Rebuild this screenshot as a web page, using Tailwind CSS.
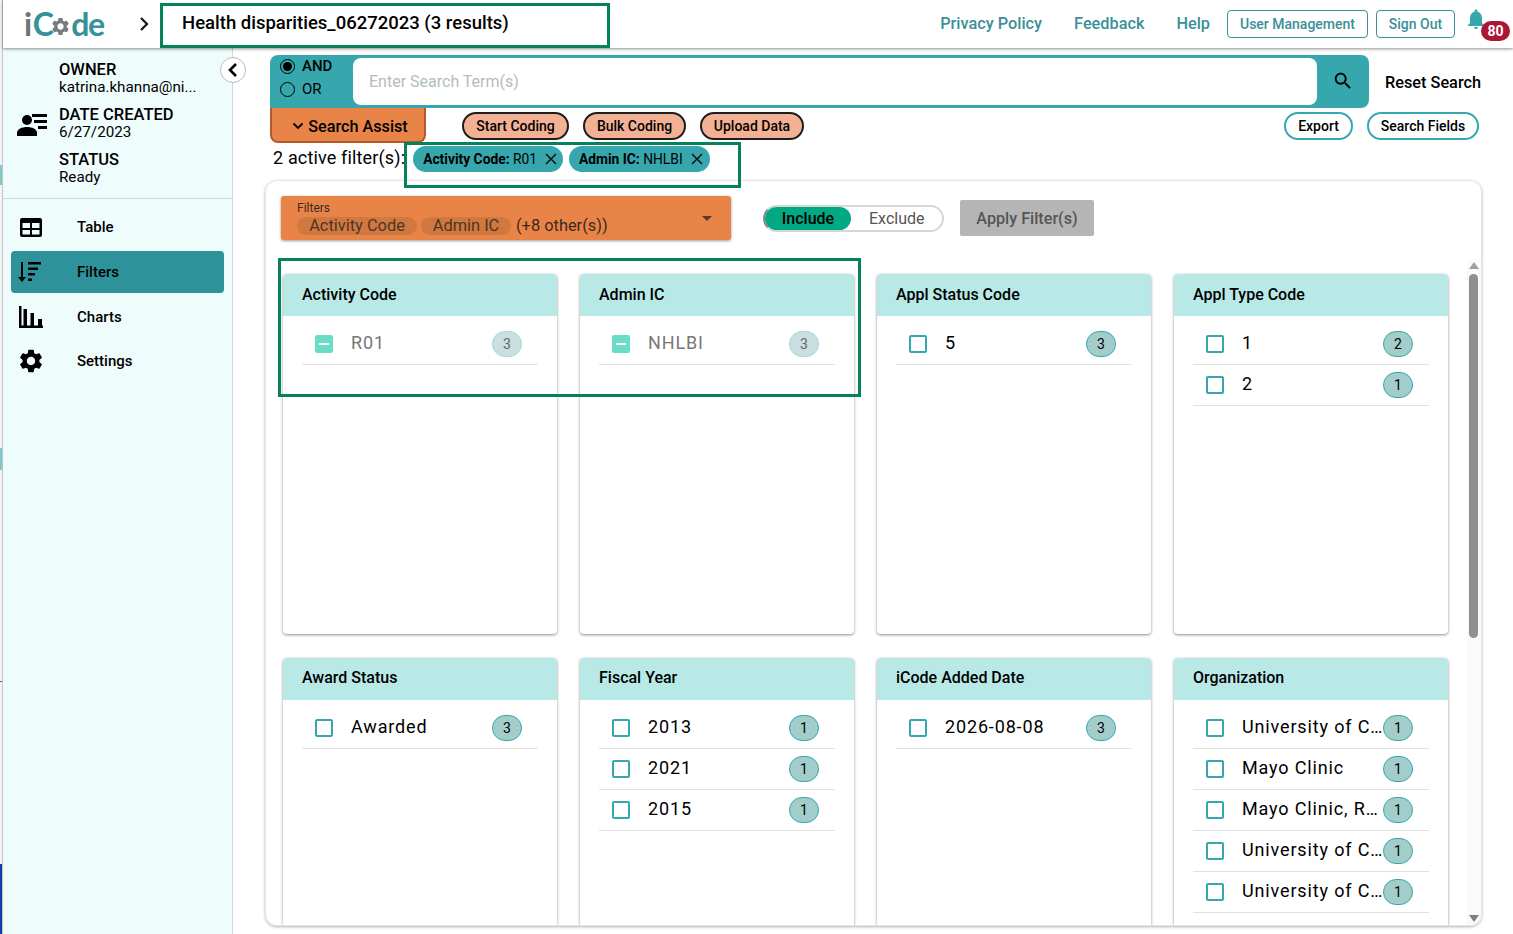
<!DOCTYPE html>
<html>
<head>
<meta charset="utf-8">
<title>iCode</title>
<script src="https://cdn.jsdelivr.net/npm/@tailwindcss/browser@4"></script>
</head>
<body class="font-['Roboto',sans-serif] text-black bg-white">
<div class="relative flex w-[1513px] h-[934px] overflow-hidden bg-white">
  <!-- desktop strip -->
  <div class="flex flex-col w-[3px] h-[934px] shrink-0 bg-[#f4f4f4] border-r border-[#c4c4c4]">
    <div class="h-[165px]"></div>
    <div class="h-[20px] bg-[#7cc8cc]"></div>
    <div class="h-[263px]"></div>
    <div class="h-[22px] bg-[#7cc8cc]"></div>
    <div class="h-[211px]"></div>
    <div class="h-[1px] bg-[#b8284c]"></div>
    <div class="h-[182px]"></div>
    <div class="h-[70px] bg-[#0f3fa8]"></div>
  </div>
  <div class="flex flex-col flex-1 min-w-0">
    <!-- header -->
    <header class="relative z-10 flex items-center h-[48px] shrink-0 bg-white shadow-[0_1px_3px_rgba(0,0,0,0.45)]">
      <div class="flex items-center ml-[21px] w-[82px] h-[40px] text-[#36919a] text-[32px] font-bold leading-[40px] font-['Lato',sans-serif] tracking-[-1.5px]">
        <span class="text-[#6f7478] mr-[2px]">i</span><span>C</span>
        <svg class="w-[21px] h-[21px] mt-[5px] ml-[-2px] shrink-0" viewBox="0 0 24 24" fill="#777c80"><path d="M19.14 12.94c.04-.3.06-.61.06-.94 0-.32-.02-.64-.07-.94l2.03-1.58c.18-.14.23-.41.12-.61l-1.92-3.32c-.12-.22-.37-.29-.59-.22l-2.39.96c-.5-.38-1.03-.7-1.62-.94l-.36-2.54c-.04-.24-.24-.41-.48-.41h-3.84c-.24 0-.43.17-.47.41l-.36 2.54c-.59.24-1.13.57-1.62.94l-2.39-.96c-.22-.08-.47 0-.59.22L2.74 8.87c-.12.21-.08.47.12.61l2.03 1.58c-.05.3-.09.63-.09.94s.02.64.07.94l-2.03 1.58c-.18.14-.23.41-.12.61l1.92 3.32c.12.22.37.29.59.22l2.39-.96c.5.38 1.03.7 1.62.94l.36 2.54c.05.24.24.41.48.41h3.84c.24 0 .44-.17.47-.41l.36-2.54c.59-.24 1.13-.56 1.62-.94l2.39.96c.22.08.47 0 .59-.22l1.92-3.32c.12-.22.07-.47-.12-.61l-2.01-1.58zM12 15.6c-1.98 0-3.6-1.62-3.6-3.6s1.62-3.6 3.6-3.6 3.6 1.62 3.6 3.6-1.62 3.6-3.6 3.6z"/></svg>
        <span>de</span>
      </div>
      <svg class="w-[12px] h-[16px] ml-[32px]" viewBox="0 0 12 16" fill="none" stroke="#111" stroke-width="2.2"><path d="M3 2l6 6-6 6"/></svg>
      <div class="ml-[32px] text-[18.5px] font-medium leading-[24px] mb-[2px]">Health disparities_06272023 (3 results)</div>
      <nav class="flex items-center ml-auto text-[16.3px] font-medium text-[#3a8f98]">
        <a class="mr-[32px]">Privacy Policy</a>
        <a class="mr-[32px]">Feedback</a>
        <a class="mr-[17px]">Help</a>
        <a class="flex items-center justify-center w-[141px] h-[28px] border border-[#3a8f98] rounded-[4px] text-[14px] mr-[8px]">User Management</a>
        <a class="flex items-center justify-center w-[79px] h-[28px] border border-[#3a8f98] rounded-[4px] text-[14px] mr-[10px]">Sign Out</a>
        <div class="relative w-[48px] h-[40px]">
          <svg class="absolute left-[-1px] top-[3px] w-[24px] h-[24px]" viewBox="0 0 24 24" fill="#36a7ad"><path d="M12 22c1.1 0 2-.9 2-2h-4c0 1.1.89 2 2 2zm6-6v-5c0-3.07-1.64-5.64-4.5-6.32V4c0-.83-.67-1.5-1.5-1.5s-1.5.67-1.5 1.5v.68C7.63 5.36 6 7.92 6 11v5l-2 2v1h16v-1l-2-2z"/></svg>
          <span class="absolute left-[16px] top-[17px] flex items-center justify-center w-[29px] h-[20px] rounded-full bg-[#ab1634] text-white text-[14px] font-bold">80</span>
        </div>
      </nav>
    </header>
    <div class="flex flex-1 min-h-0">
      <!-- sidebar -->
      <aside class="relative w-[230px] shrink-0 bg-[#effcfc] border-r border-[#c9dcdc]">
        <div class="flex items-center h-[151px] border-b border-[#c9dcdc] pl-[14px]">
          <svg class="w-[31px] h-[24px] shrink-0 mt-[4px]" viewBox="0 0 31 24" fill="#000">
            <circle cx="10" cy="7" r="5"/><path d="M0 23v-3c0-4 5-6 10-6s10 2 10 6v3z"/>
            <rect x="15" y="1" width="15" height="3"/><rect x="17" y="7" width="13" height="3"/><rect x="21" y="13" width="9" height="3"/>
          </svg>
          <div class="ml-[11px] pt-[5px]">
            <div class="h-[45px]">
              <div class="text-[16.5px] font-medium leading-[17px]">OWNER</div>
              <div class="text-[15.2px] leading-[18px]">katrina.khanna@ni...</div>
            </div>
            <div class="h-[45px]">
              <div class="text-[16.5px] font-medium leading-[17px]">DATE CREATED</div>
              <div class="text-[15.2px] leading-[18px]">6/27/2023</div>
            </div>
            <div class="h-[40px]">
              <div class="text-[16.5px] font-medium leading-[17px]">STATUS</div>
              <div class="text-[15.2px] leading-[18px]">Ready</div>
            </div>
          </div>
        </div>
        <nav class="pt-[7px] text-[15px] font-medium">
          <a class="flex items-center h-[42px] mx-[8px] mb-[3px] rounded-[4px]">
            <svg class="ml-[8px] w-[24px] h-[24px]" viewBox="0 0 24 24" fill="#000"><path fill-rule="evenodd" d="M3 3h18a2 2 0 0 1 2 2v15a2 2 0 0 1-2 2H3a2 2 0 0 1-2-2V5a2 2 0 0 1 2-2zM3.500 8v5h7.500V8zM13 8v5h7.500V8zM3.500 15v4.500H11V15zM13 15v4.500h7.500V15z"/></svg>
            <span class="ml-[34px]">Table</span>
          </a>
          <a class="flex items-center h-[42px] mx-[8px] mb-[3px] rounded-[4px] bg-[#2d9299]">
            <svg class="ml-[6px] w-[26px] h-[24px]" viewBox="0 0 26 24" fill="#000">
              <rect x="4" y="2" width="2" height="17"/><path d="M1 17h8l-4 5z"/>
              <rect x="11" y="2" width="13" height="2.500"/><rect x="11" y="7.500" width="10" height="2.500"/><rect x="11" y="13" width="7" height="2.500"/><rect x="11" y="18.500" width="4" height="2.500"/>
            </svg>
            <span class="ml-[34px]">Filters</span>
          </a>
          <a class="flex items-center h-[42px] mx-[8px] mb-[2px] rounded-[4px]">
            <svg class="ml-[8px] w-[24px] h-[24px]" viewBox="0 0 24 24" fill="#000">
              <rect x="0" y="1" width="2.500" height="22"/><rect x="0" y="20.500" width="24" height="2.500"/><rect x="4.500" y="4" width="3.500" height="17"/><rect x="11.500" y="8" width="3.500" height="13"/><rect x="19" y="14" width="4" height="7"/>
            </svg>
            <span class="ml-[34px]">Charts</span>
          </a>
          <a class="flex items-center h-[42px] mx-[8px] rounded-[4px]">
            <svg class="ml-[6px] w-[28px] h-[28px]" viewBox="0 0 24 24" fill="#000"><path d="M19.14 12.94c.04-.3.06-.61.06-.94 0-.32-.02-.64-.07-.94l2.03-1.58c.18-.14.23-.41.12-.61l-1.92-3.32c-.12-.22-.37-.29-.59-.22l-2.39.96c-.5-.38-1.03-.7-1.62-.94l-.36-2.54c-.04-.24-.24-.41-.48-.41h-3.84c-.24 0-.43.17-.47.41l-.36 2.54c-.59.24-1.13.57-1.62.94l-2.39-.96c-.22-.08-.47 0-.59.22L2.74 8.87c-.12.21-.08.47.12.61l2.03 1.58c-.05.3-.09.63-.09.94s.02.64.07.94l-2.03 1.58c-.18.14-.23.41-.12.61l1.92 3.32c.12.22.37.29.59.22l2.39-.96c.5.38 1.03.7 1.62.94l.36 2.54c.05.24.24.41.48.41h3.84c.24 0 .44-.17.47-.41l.36-2.54c.59-.24 1.13-.56 1.62-.94l2.39.96c.22.08.47 0 .59-.22l1.92-3.32c.12-.22.07-.47-.12-.61l-2.01-1.58zM12 15.600c-1.98 0-3.6-1.62-3.6-3.6s1.62-3.6 3.6-3.6 3.6 1.62 3.6 3.6-1.62 3.6-3.6 3.6z"/></svg>
            <span class="ml-[32px]">Settings</span>
          </a>
        </nav>
      </aside>
      <!-- main -->
      <main class="relative flex-1 min-w-0 h-[886px] pl-[37px] pt-[7px]">
        <button class="absolute z-10 left-[-13px] top-[9px] flex items-center justify-center w-[26px] h-[26px] rounded-full bg-white border border-[#bbb]">
          <svg class="w-[12px] h-[16px]" viewBox="0 0 12 16" fill="none" stroke="#000" stroke-width="2.600"><path d="M9 2L3 8l6 6"/></svg>
        </button>
        <!-- search row -->
        <div class="flex items-center">
          <div class="flex w-[1099px] h-[53px] rounded-t-lg rounded-br-lg bg-[#36a7ad]">
            <div class="w-[83px] pl-[10px] text-[15px] leading-[23px]">
              <label class="flex items-center font-medium">
                <span class="flex items-center justify-center w-[15px] h-[15px] rounded-full border-[1.5px] border-black"><span class="w-[9px] h-[9px] rounded-full bg-black"></span></span>
                <span class="ml-[7px]">AND</span>
              </label>
              <label class="flex items-center">
                <span class="w-[15px] h-[15px] rounded-full border-[1.5px] border-black"></span>
                <span class="ml-[7px]">OR</span>
              </label>
            </div>
            <div class="flex items-center w-[964px] h-[47px] mt-[3px] bg-white rounded-lg pl-[16px] text-[16px] text-[#b2bcc2]">Enter Search Term(s)</div>
            <div class="flex flex-1 items-center justify-center pb-[2px]">
              <svg class="w-[22px] h-[22px]" viewBox="0 0 24 24" fill="#000"><path d="M15.500 14h-.79l-.28-.27C15.410 12.590 16 11.110 16 9.500 16 5.910 13.090 3 9.500 3S3 5.910 3 9.500 5.910 16 9.500 16c1.610 0 3.090-.59 4.230-1.570l.27.28v.79l5 4.990L20.490 19l-4.990-5zm-6 0C7.010 14 5 11.990 5 9.500S7.010 5 9.500 5 14 7.010 14 9.500 11.990 14 9.500 14z"/></svg>
            </div>
          </div>
          <button class="ml-[16px] pt-[4px] text-[16.3px] font-medium">Reset Search</button>
        </div>
        <!-- tool row -->
        <div class="flex items-start h-[35px]">
          <button class="flex items-center justify-center w-[156px] h-[35px] pt-[5px] pl-[4px] bg-[#e98449] border-x-2 border-b-2 border-[#b5592a] rounded-b-lg text-[16.2px] font-medium">
            <svg class="w-[12px] h-[8px] mr-[4px] mb-[2px]" viewBox="0 0 12 8" fill="none" stroke="#000" stroke-width="1.800"><path d="M1.500 1.500L6 6l4.500-4.500"/></svg>
            Search Assist
          </button>
          <button class="flex items-center justify-center w-[107px] h-[28px] mt-[4px] ml-[36px] rounded-full border-2 border-[#1d1d1d] bg-[#f2b095] text-[14px] font-medium">Start Coding</button>
          <button class="flex items-center justify-center w-[103px] h-[28px] mt-[4px] ml-[14px] rounded-full border-2 border-[#1d1d1d] bg-[#f2b095] text-[14px] font-medium">Bulk Coding</button>
          <button class="flex items-center justify-center w-[104px] h-[28px] mt-[4px] ml-[14px] rounded-full border-2 border-[#1d1d1d] bg-[#f2b095] text-[14px] font-medium">Upload Data</button>
          <button class="flex items-center justify-center w-[69px] h-[28px] mt-[4px] ml-auto rounded-full border-2 border-[#36a7ad] text-[14px] font-medium">Export</button>
          <button class="flex items-center justify-center w-[112px] h-[28px] mt-[4px] ml-[14px] mr-[34px] rounded-full border-2 border-[#36a7ad] text-[14px] font-medium">Search Fields</button>
        </div>
        <!-- active filters -->
        <div class="flex items-start h-[37px] pl-[3px] pt-[3px]">
          <span class="text-[18px] leading-[24px] tracking-[0.15px]">2 active filter(s):</span>
          <span class="flex items-center h-[26px] ml-[8px] pl-[10px] pr-[3px] rounded-full bg-[#36a7ad] text-[13.8px] whitespace-nowrap"><b class="font-bold">Activity Code:</b>&nbsp;R01
            <svg class="w-[18px] h-[18px] ml-[5px]" viewBox="0 0 18 18" fill="none" stroke="#111" stroke-width="1.500"><path d="M4 4l10 10M14 4L4 14"/></svg></span>
          <span class="flex items-center h-[26px] ml-[6px] pl-[10px] pr-[4px] rounded-full bg-[#36a7ad] text-[13.8px] whitespace-nowrap"><b class="font-bold">Admin IC:</b>&nbsp;NHLBI
            <svg class="w-[18px] h-[18px] ml-[5px]" viewBox="0 0 18 18" fill="none" stroke="#111" stroke-width="1.500"><path d="M4 4l10 10M14 4L4 14"/></svg></span>
        </div>
        <!-- panel -->
        <section class="relative w-[1217px] h-[746px] ml-[-5px] rounded-[12px] border border-[#e4e4e4] shadow-[0_1px_3px_rgba(0,0,0,0.3)] overflow-hidden pl-[15px] pt-[15px]">
          <div class="flex items-start h-[78px]">
            <div class="flex items-center justify-between w-[450px] h-[44px] rounded-[3px] bg-[#e98449] shadow-[0_1px_3px_rgba(0,0,0,0.4)] pl-[16px] pr-[19px]">
              <div>
                <div class="text-[12px] leading-[13px] text-[#3a2a20]">Filters</div>
                <div class="flex items-center h-[20px] pt-[2px] text-[16.4px] leading-[18px] text-[#3a2a20]">
                  <span class="flex justify-center w-[120px] rounded-full bg-[#d0783f] text-[#4d3526]">Activity Code</span>
                  <span class="flex justify-center w-[90px] ml-[4px] rounded-full bg-[#d0783f] text-[#4d3526]">Admin IC</span>
                  <span class="ml-[5px]">(+8 other(s))</span>
                </div>
              </div>
              <span class="w-0 h-0 border-x-[5px] border-x-transparent border-t-[5px] border-t-[#5a3a28]"></span>
            </div>
            <div class="flex items-center w-[181px] h-[27px] mt-[9px] ml-[32px] rounded-full border-2 border-[#d6d6d6] border-l-[#888] text-[16px] font-medium">
              <span class="flex items-center justify-center w-[86px] h-[23px] rounded-full bg-[#00a884]">Include</span>
              <span class="ml-[18px] font-normal text-[#555]">Exclude</span>
            </div>
            <button class="flex items-center justify-center w-[134px] h-[36px] pt-[3px] mt-[4px] ml-[16px] rounded-[2px] bg-[#b5b5b5] text-[16.2px] font-medium text-[#555]">Apply Filter(s)</button>
          </div>
          <div class="grid grid-cols-4 w-[1165px] ml-[2px] gap-x-[23px] gap-y-[24px] grid-rows-[360px_360px]">
            <!-- Activity Code -->
            <article class="rounded-[4px] bg-white shadow-[0_1px_3px_rgba(0,0,0,0.45)] overflow-hidden">
              <h3 class="flex items-center h-[42px] pl-[19px] bg-[#b8e9e7] text-[16px] font-medium">Activity Code</h3>
              <ul class="mx-[19px] pt-[8px] text-[18px] tracking-[0.85px]">
                <li class="flex items-center h-[41px] border-b border-[#e2e2e2] pl-[13px] pr-[16px]">
                  <span class="flex items-center justify-center w-[18px] h-[18px] rounded-[2px] bg-[#6bdcc6] shrink-0"><span class="w-[10px] h-[2px] bg-white"></span></span>
                  <span class="ml-[18px] pb-[4px] flex-1 whitespace-nowrap text-[#777]">R01</span>
                  <span class="flex items-center justify-center w-[30px] h-[26px] rounded-full bg-[#c9dfe0] border border-[#a6d6d8] text-[14px] tracking-normal text-[#666]">3</span>
                </li>
              </ul>
            </article>
            <!-- Admin IC -->
            <article class="rounded-[4px] bg-white shadow-[0_1px_3px_rgba(0,0,0,0.45)] overflow-hidden">
              <h3 class="flex items-center h-[42px] pl-[19px] bg-[#b8e9e7] text-[16px] font-medium">Admin IC</h3>
              <ul class="mx-[19px] pt-[8px] text-[18px] tracking-[0.85px]">
                <li class="flex items-center h-[41px] border-b border-[#e2e2e2] pl-[13px] pr-[16px]">
                  <span class="flex items-center justify-center w-[18px] h-[18px] rounded-[2px] bg-[#6bdcc6] shrink-0"><span class="w-[10px] h-[2px] bg-white"></span></span>
                  <span class="ml-[18px] pb-[4px] flex-1 whitespace-nowrap text-[#777]">NHLBI</span>
                  <span class="flex items-center justify-center w-[30px] h-[26px] rounded-full bg-[#c9dfe0] border border-[#a6d6d8] text-[14px] tracking-normal text-[#666]">3</span>
                </li>
              </ul>
            </article>
            <!-- Appl Status Code -->
            <article class="rounded-[4px] bg-white shadow-[0_1px_3px_rgba(0,0,0,0.45)] overflow-hidden">
              <h3 class="flex items-center h-[42px] pl-[19px] bg-[#b8e9e7] text-[16px] font-medium">Appl Status Code</h3>
              <ul class="mx-[19px] pt-[8px] text-[18px] tracking-[0.85px]">
                <li class="flex items-center h-[41px] border-b border-[#e2e2e2] pl-[13px] pr-[16px]">
                  <span class="w-[18px] h-[18px] rounded-[2px] border-2 border-[#36a7ad] shrink-0"></span>
                  <span class="ml-[18px] pb-[4px] flex-1 whitespace-nowrap">5</span>
                  <span class="flex items-center justify-center w-[30px] h-[26px] rounded-full bg-[#a3cdcb] border border-[#36a7ad] text-[14px] tracking-normal">3</span>
                </li>
              </ul>
            </article>
            <!-- Appl Type Code -->
            <article class="rounded-[4px] bg-white shadow-[0_1px_3px_rgba(0,0,0,0.45)] overflow-hidden">
              <h3 class="flex items-center h-[42px] pl-[19px] bg-[#b8e9e7] text-[16px] font-medium">Appl Type Code</h3>
              <ul class="mx-[19px] pt-[8px] text-[18px] tracking-[0.85px]">
                <li class="flex items-center h-[41px] border-b border-[#e2e2e2] pl-[13px] pr-[16px]">
                  <span class="w-[18px] h-[18px] rounded-[2px] border-2 border-[#36a7ad] shrink-0"></span>
                  <span class="ml-[18px] pb-[4px] flex-1 whitespace-nowrap">1</span>
                  <span class="flex items-center justify-center w-[30px] h-[26px] rounded-full bg-[#a3cdcb] border border-[#36a7ad] text-[14px] tracking-normal">2</span>
                </li>
                <li class="flex items-center h-[41px] border-b border-[#e2e2e2] pl-[13px] pr-[16px]">
                  <span class="w-[18px] h-[18px] rounded-[2px] border-2 border-[#36a7ad] shrink-0"></span>
                  <span class="ml-[18px] pb-[4px] flex-1 whitespace-nowrap">2</span>
                  <span class="flex items-center justify-center w-[30px] h-[26px] rounded-full bg-[#a3cdcb] border border-[#36a7ad] text-[14px] tracking-normal">1</span>
                </li>
              </ul>
            </article>
            <!-- Award Status -->
            <article class="rounded-[4px] bg-white shadow-[0_1px_3px_rgba(0,0,0,0.45)] overflow-hidden">
              <h3 class="flex items-center h-[42px] pl-[19px] pb-[2px] bg-[#b8e9e7] text-[16px] font-medium">Award Status</h3>
              <ul class="mx-[19px] pt-[8px] text-[18px] tracking-[0.85px]">
                <li class="flex items-center h-[41px] border-b border-[#e2e2e2] pl-[13px] pr-[16px]">
                  <span class="w-[18px] h-[18px] rounded-[2px] border-2 border-[#36a7ad] shrink-0"></span>
                  <span class="ml-[18px] pb-[4px] flex-1 whitespace-nowrap">Awarded</span>
                  <span class="flex items-center justify-center w-[30px] h-[26px] rounded-full bg-[#a3cdcb] border border-[#36a7ad] text-[14px] tracking-normal">3</span>
                </li>
              </ul>
            </article>
            <!-- Fiscal Year -->
            <article class="rounded-[4px] bg-white shadow-[0_1px_3px_rgba(0,0,0,0.45)] overflow-hidden">
              <h3 class="flex items-center h-[42px] pl-[19px] pb-[2px] bg-[#b8e9e7] text-[16px] font-medium">Fiscal Year</h3>
              <ul class="mx-[19px] pt-[8px] text-[18px] tracking-[0.85px]">
                <li class="flex items-center h-[41px] border-b border-[#e2e2e2] pl-[13px] pr-[16px]">
                  <span class="w-[18px] h-[18px] rounded-[2px] border-2 border-[#36a7ad] shrink-0"></span>
                  <span class="ml-[18px] pb-[4px] flex-1 whitespace-nowrap">2013</span>
                  <span class="flex items-center justify-center w-[30px] h-[26px] rounded-full bg-[#a3cdcb] border border-[#36a7ad] text-[14px] tracking-normal">1</span>
                </li>
                <li class="flex items-center h-[41px] border-b border-[#e2e2e2] pl-[13px] pr-[16px]">
                  <span class="w-[18px] h-[18px] rounded-[2px] border-2 border-[#36a7ad] shrink-0"></span>
                  <span class="ml-[18px] pb-[4px] flex-1 whitespace-nowrap">2021</span>
                  <span class="flex items-center justify-center w-[30px] h-[26px] rounded-full bg-[#a3cdcb] border border-[#36a7ad] text-[14px] tracking-normal">1</span>
                </li>
                <li class="flex items-center h-[41px] border-b border-[#e2e2e2] pl-[13px] pr-[16px]">
                  <span class="w-[18px] h-[18px] rounded-[2px] border-2 border-[#36a7ad] shrink-0"></span>
                  <span class="ml-[18px] pb-[4px] flex-1 whitespace-nowrap">2015</span>
                  <span class="flex items-center justify-center w-[30px] h-[26px] rounded-full bg-[#a3cdcb] border border-[#36a7ad] text-[14px] tracking-normal">1</span>
                </li>
              </ul>
            </article>
            <!-- iCode Added Date -->
            <article class="rounded-[4px] bg-white shadow-[0_1px_3px_rgba(0,0,0,0.45)] overflow-hidden">
              <h3 class="flex items-center h-[42px] pl-[19px] pb-[2px] bg-[#b8e9e7] text-[16px] font-medium">iCode Added Date</h3>
              <ul class="mx-[19px] pt-[8px] text-[18px] tracking-[0.85px]">
                <li class="flex items-center h-[41px] border-b border-[#e2e2e2] pl-[13px] pr-[16px]">
                  <span class="w-[18px] h-[18px] rounded-[2px] border-2 border-[#36a7ad] shrink-0"></span>
                  <span class="ml-[18px] pb-[4px] flex-1 whitespace-nowrap">2026-08-08</span>
                  <span class="flex items-center justify-center w-[30px] h-[26px] rounded-full bg-[#a3cdcb] border border-[#36a7ad] text-[14px] tracking-normal">3</span>
                </li>
              </ul>
            </article>
            <!-- Organization -->
            <article class="rounded-[4px] bg-white shadow-[0_1px_3px_rgba(0,0,0,0.45)] overflow-hidden">
              <h3 class="flex items-center h-[42px] pl-[19px] pb-[2px] bg-[#b8e9e7] text-[16px] font-medium">Organization</h3>
              <ul class="mx-[19px] pt-[8px] text-[18px] tracking-[0.85px]">
                <li class="flex items-center h-[41px] border-b border-[#e2e2e2] pl-[13px] pr-[16px]">
                  <span class="w-[18px] h-[18px] rounded-[2px] border-2 border-[#36a7ad] shrink-0"></span>
                  <span class="ml-[18px] pb-[4px] flex-1 min-w-0 whitespace-nowrap">University of C…</span>
                  <span class="flex items-center justify-center w-[30px] h-[26px] shrink-0 rounded-full bg-[#a3cdcb] border border-[#36a7ad] text-[14px] tracking-normal">1</span>
                </li>
                <li class="flex items-center h-[41px] border-b border-[#e2e2e2] pl-[13px] pr-[16px]">
                  <span class="w-[18px] h-[18px] rounded-[2px] border-2 border-[#36a7ad] shrink-0"></span>
                  <span class="ml-[18px] pb-[4px] flex-1 min-w-0 whitespace-nowrap">Mayo Clinic</span>
                  <span class="flex items-center justify-center w-[30px] h-[26px] shrink-0 rounded-full bg-[#a3cdcb] border border-[#36a7ad] text-[14px] tracking-normal">1</span>
                </li>
                <li class="flex items-center h-[41px] border-b border-[#e2e2e2] pl-[13px] pr-[16px]">
                  <span class="w-[18px] h-[18px] rounded-[2px] border-2 border-[#36a7ad] shrink-0"></span>
                  <span class="ml-[18px] pb-[4px] flex-1 min-w-0 whitespace-nowrap">Mayo Clinic, R…</span>
                  <span class="flex items-center justify-center w-[30px] h-[26px] shrink-0 rounded-full bg-[#a3cdcb] border border-[#36a7ad] text-[14px] tracking-normal">1</span>
                </li>
                <li class="flex items-center h-[41px] border-b border-[#e2e2e2] pl-[13px] pr-[16px]">
                  <span class="w-[18px] h-[18px] rounded-[2px] border-2 border-[#36a7ad] shrink-0"></span>
                  <span class="ml-[18px] pb-[4px] flex-1 min-w-0 whitespace-nowrap">University of C…</span>
                  <span class="flex items-center justify-center w-[30px] h-[26px] shrink-0 rounded-full bg-[#a3cdcb] border border-[#36a7ad] text-[14px] tracking-normal">1</span>
                </li>
                <li class="flex items-center h-[41px] border-b border-[#e2e2e2] pl-[13px] pr-[16px]">
                  <span class="w-[18px] h-[18px] rounded-[2px] border-2 border-[#36a7ad] shrink-0"></span>
                  <span class="ml-[18px] pb-[4px] flex-1 min-w-0 whitespace-nowrap">University of C…</span>
                  <span class="flex items-center justify-center w-[30px] h-[26px] shrink-0 rounded-full bg-[#a3cdcb] border border-[#36a7ad] text-[14px] tracking-normal">1</span>
                </li>
              </ul>
            </article>
          </div>
          <!-- scrollbar overlay -->
          <div class="absolute right-0 top-[78px] bottom-0 w-[14px] bg-[#fafafa]">
            <span class="absolute left-[2px] top-[3px] w-0 h-0 border-x-[5px] border-x-transparent border-b-[7px] border-b-[#a0a0a0]"></span>
            <span class="absolute left-[2px] top-[15px] w-[9px] h-[364px] rounded-full bg-[#8f8f8f]"></span>
            <span class="absolute left-[2px] bottom-[3px] w-0 h-0 border-x-[5px] border-x-transparent border-t-[7px] border-t-[#7f7f7f]"></span>
          </div>
        </section>
      </main>
    </div>
  </div>
  <!-- annotation rectangles -->
  <div class="absolute left-[160px] top-[3px] w-[450px] h-[45px] border-[3px] border-[#05825a] pointer-events-none z-20"></div>
  <div class="absolute left-[404px] top-[142px] w-[337px] h-[46px] border-[3px] border-[#05825a] pointer-events-none z-20"></div>
  <div class="absolute left-[278px] top-[258px] w-[583px] h-[139px] border-[3px] border-[#05825a] pointer-events-none z-20"></div>
</div>
</body>
</html>
